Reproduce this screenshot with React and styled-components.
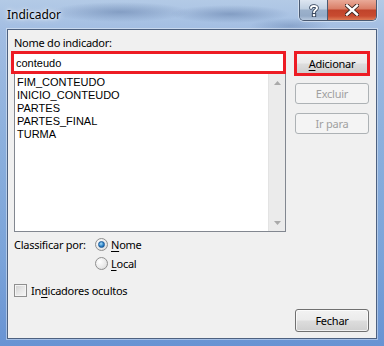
import styled, { createGlobalStyle } from 'styled-components'

const GlobalStyle = createGlobalStyle`
  html, body { margin: 0; padding: 0; overflow: hidden; }
  body { font-family: "Liberation Sans", Arial, sans-serif; }
`

const uiFont = `"Noto Sans", "Liberation Sans", Arial, sans-serif`
const listFont = `"Liberation Sans", Arial, sans-serif`

const Window = styled.div`
    width: 384px;
    height: 346px;
    box-sizing: border-box;
    display: flex;
    flex-direction: column;
    background:
        radial-gradient(ellipse 70px 10px at 120px 12px, rgba(55, 85, 135, 0.35), transparent),
        radial-gradient(ellipse 60px 9px at 230px 14px, rgba(55, 85, 135, 0.35), transparent),
        radial-gradient(ellipse 40px 8px at 290px 26px, rgba(55, 85, 135, 0.25), transparent),
        linear-gradient(180deg, #b3cae6 0%, #a2bde2 9%, #8cb0dd 40%, #7aa3d9 75%, #6893d3 100%);
`

const TitleBar = styled.div`
    height: 29px;
    flex: none;
    display: flex;
    justify-content: space-between;
    align-items: flex-start;
    padding: 0 7px 0 7px;
`

const Title = styled.div`
    font-family: ${uiFont};
    font-size: 12px;
    line-height: 16px;
    padding-top: 7px;
    color: #000;
    text-shadow: 0 0 6px rgba(255, 255, 255, 0.9), 0 0 3px rgba(255, 255, 255, 0.9);
`

const CaptionGroup = styled.div`
    display: flex;
    height: 20px;
    border: 1px solid #4a5a72;
    border-top: none;
    border-radius: 0 0 5px 5px;
    overflow: hidden;
    box-shadow: 0 0 0 1px rgba(255, 255, 255, 0.45);
`

const CaptionButton = styled.div`
    width: ${p => p.$w}px;
    display: flex;
    align-items: center;
    justify-content: center;
    background: ${p => p.$close
        ? 'linear-gradient(180deg, #e9aa98 0%, #d97d66 45%, #c0432a 50%, #c84b30 80%, #dd7b56 100%)'
        : 'linear-gradient(180deg, #dde6f1 0%, #c0cfe1 45%, #9cb1cb 50%, #95abc7 80%, #b7c9de 100%)'};
    & + & { border-left: 1px solid #4a5a72; }
`

const Client = styled.div`
    flex: 1;
    margin: 0 7px 7px 7px;
    border: 1px solid #4d6180;
    box-shadow: 0 0 0 1px rgba(255, 255, 255, 0.4);
    background: #f0f0f0;
    padding: 5px 7px 0 6px;
    display: flex;
    flex-direction: column;
    font-family: ${uiFont};
    font-size: 11px;
    letter-spacing: -0.25px;
    color: #000;
`

const TopArea = styled.div`
    display: flex;
    gap: 9px;
`

const LeftCol = styled.div`
    width: 272px;
    display: flex;
    flex-direction: column;
`

const Label = styled.div`
    height: 16px;
    line-height: 16px;
    white-space: nowrap;
`

const TextBox = styled.div`
    margin-left: -3px;
    height: 23px;
    box-sizing: border-box;
    border: 3px solid #ed1c24;
    background: #fff;
    font-family: ${listFont};
    font-size: 11px;
    letter-spacing: 0;
    line-height: 18px;
    padding-left: 2px;
`

const List = styled.div`
    height: 158px;
    box-sizing: border-box;
    border: 1px solid #828790;
    border-top: none;
    background: #fff;
    display: flex;
`

const Items = styled.div`
    flex: 1;
    padding: 2px 0 0 2px;
    font-family: ${listFont};
    font-size: 11px;
    letter-spacing: 0;
`

const Item = styled.div`
    height: 13px;
    line-height: 13px;
`

const ScrollBar = styled.div`
    width: 17px;
    box-sizing: border-box;
    border-left: 1px solid #e3e3e3;
    background: #ebebeb;
    display: flex;
    flex-direction: column;
    justify-content: space-between;
`

const Arrow = styled.div`
    height: 17px;
    display: flex;
    align-items: center;
    justify-content: center;
`

const RightCol = styled.div`
    width: 74px;
    padding-top: 16px;
    display: flex;
    flex-direction: column;
    gap: 9px;
`

const Button = styled.div`
    box-sizing: border-box;
    width: ${p => (p.$highlight ? 76 : 74)}px;
    margin-left: ${p => (p.$highlight ? -1 : 0)}px;
    height: ${p => p.$h || 21}px;
    margin-bottom: ${p => (p.$highlight ? -2 : 0)}px;
    border: ${p => (p.$highlight ? '3px solid #ed1c24' : p.$disabled ? '1px solid #adb2b5' : '1px solid #707070')};
    border-radius: ${p => (p.$highlight ? 0 : 3)}px;
    background: ${p => p.$disabled
        ? '#f4f4f4'
        : 'linear-gradient(180deg, #f2f2f2 0%, #ebebeb 48%, #dddddd 52%, #cfcfcf 100%)'};
    box-shadow: ${p => (p.$disabled || p.$highlight ? 'none' : 'inset 0 0 0 1px rgba(255,255,255,0.7)')};
    color: ${p => (p.$disabled ? '#a0a0a0' : '#000')};
    display: flex;
    align-items: center;
    justify-content: center;
    font-size: 11px;
`

const Key = styled.span`
    text-decoration: underline;
    text-underline-offset: 2px;
`

const SortGroup = styled.div`
    display: flex;
    margin-top: 3px;
`

const SortLabel = styled.div`
    width: 81px;
    height: 19px;
    line-height: 19px;
`

const Options = styled.div`
    display: flex;
    flex-direction: column;
`

const OptionRow = styled.label`
    height: 19px;
    display: flex;
    align-items: center;
    gap: ${p => p.$gap || 3}px;
    margin-top: ${p => p.$mt || 0}px;
`

const Radio = styled.span`
    width: 13px;
    height: 13px;
    box-sizing: border-box;
    border-radius: 50%;
    border: 1px solid #8f8f8f;
    background: radial-gradient(circle at 35% 35%, #ffffff 0%, #e8e8e8 60%, #cfcfcf 100%);
    display: flex;
    align-items: center;
    justify-content: center;
    &::after {
        content: '';
        width: 5px;
        height: 5px;
        border-radius: 50%;
        display: ${p => (p.$checked ? 'block' : 'none')};
        background: radial-gradient(circle at 40% 35%, #a8dcf8 0%, #2d83c6 55%, #0d4f94 100%);
        border: 1px solid #1b5a9a;
    }
`

const Checkbox = styled.span`
    width: 13px;
    height: 13px;
    box-sizing: border-box;
    border: 1px solid #8f8f8f;
    background: linear-gradient(135deg, #cfcfcf 0%, #e6e6e6 50%, #f7f7f7 100%);
    box-shadow: inset 0 0 0 1px #f4f4f4;
`

const Footer = styled.div`
    display: flex;
    justify-content: flex-end;
    margin-top: 9px;
`

const items = ['FIM_CONTEUDO', 'INICIO_CONTEUDO', 'PARTES', 'PARTES_FINAL', 'TURMA']

export default function App() {
    return (
        <Window>
            <GlobalStyle />
            <TitleBar>
                <Title>Indicador</Title>
                <CaptionGroup>
                    <CaptionButton $w={27}>
                        <svg width="10" height="13" viewBox="0 0 10 13">
                            <path d="M2 4 C2 1.5 8 1.2 8 4 C8 6 5 6 5 8.2" fill="none" stroke="#2b3a52" strokeWidth="3.6" strokeLinecap="round" />
                            <path d="M2 4 C2 1.5 8 1.2 8 4 C8 6 5 6 5 8.2" fill="none" stroke="#fff" strokeWidth="2" strokeLinecap="round" />
                            <rect x="3.3" y="9.6" width="3.4" height="3.2" fill="#fff" stroke="#2b3a52" strokeWidth="0.9" />
                        </svg>
                    </CaptionButton>
                    <CaptionButton $w={48} $close>
                        <svg width="14" height="12" viewBox="0 0 14 12">
                            <path d="M2 1.5 L12 10.5 M12 1.5 L2 10.5" stroke="#3a2420" strokeWidth="4.2" strokeLinecap="square" />
                            <path d="M2 1.5 L12 10.5 M12 1.5 L2 10.5" stroke="#fff" strokeWidth="2.4" strokeLinecap="square" />
                        </svg>
                    </CaptionButton>
                </CaptionGroup>
            </TitleBar>
            <Client>
                <TopArea>
                    <LeftCol>
                        <Label>Nome do indicador:</Label>
                        <TextBox>conteudo</TextBox>
                        <List>
                            <Items>
                                {items.map(it => <Item key={it}>{it}</Item>)}
                            </Items>
                            <ScrollBar>
                                <Arrow>
                                    <svg width="7" height="4" viewBox="0 0 7 4"><path d="M3.5 0 L7 4 L0 4 Z" fill="#a9a9a9" /></svg>
                                </Arrow>
                                <Arrow>
                                    <svg width="7" height="4" viewBox="0 0 7 4"><path d="M0 0 L7 0 L3.5 4 Z" fill="#a9a9a9" /></svg>
                                </Arrow>
                            </ScrollBar>
                        </List>
                    </LeftCol>
                    <RightCol>
                        <Button $highlight $h={25}><span><Key>A</Key>dicionar</span></Button>
                        <Button $disabled>Excluir</Button>
                        <Button $disabled>Ir para</Button>
                    </RightCol>
                </TopArea>
                <SortGroup>
                    <SortLabel>Classificar por:</SortLabel>
                    <Options>
                        <OptionRow><Radio $checked /><span><Key>N</Key>ome</span></OptionRow>
                        <OptionRow><Radio /><span><Key>L</Key>ocal</span></OptionRow>
                    </Options>
                </SortGroup>
                <OptionRow $mt={8} $gap={4}>
                    <Checkbox />
                    <span>In<Key>d</Key>icadores ocultos</span>
                </OptionRow>
                <Footer>
                    <Button $h={23}>Fechar</Button>
                </Footer>
            </Client>
        </Window>
    )
}
